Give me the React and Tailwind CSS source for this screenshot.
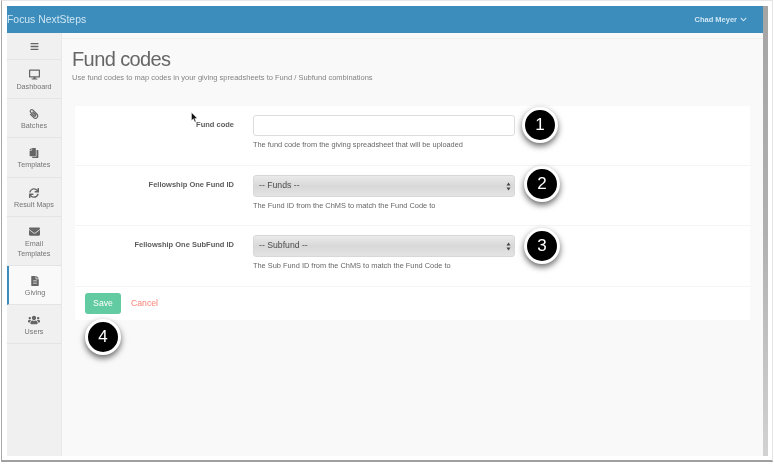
import React from 'react';
import { FaBars, FaDesktop, FaPaperclip, FaCopy, FaSync, FaEnvelope, FaFileAlt, FaUsers, FaChevronDown } from 'react-icons/fa';

const navItems = [
  { label: ['Dashboard'], icon: FaDesktop, height: 'h-[39px]', iconClass: 'text-[11px]' },
  { label: ['Batches'], icon: FaPaperclip, height: 'h-[39px]', iconClass: 'text-[10px] -scale-x-100' },
  { label: ['Templates'], icon: FaCopy, height: 'h-[40px]', iconClass: 'text-[10px] -scale-x-100' },
  { label: ['Result Maps'], icon: FaSync, height: 'h-[39px]', iconClass: 'text-[10px]' },
  { label: ['Email', 'Templates'], icon: FaEnvelope, height: 'h-[49px]', iconClass: 'text-[11px]' },
  { label: ['Giving'], icon: FaFileAlt, height: 'h-[39px]', iconClass: 'text-[10px]', active: true },
  { label: ['Users'], icon: FaUsers, height: 'h-[39px]', iconClass: 'text-[12px]' },
];

function NavItem({ item }) {
  const Icon = item.icon;
  return (
    <div
      className={`${item.height} flex flex-col items-center pt-[9px] border-b border-[#e4e4e4] ${
        item.active ? 'bg-[#f9f9f9] border-l-2 border-l-[#3c8dbc]' : ''
      }`}
    >
      <div className="h-[11px] flex items-center">
        <Icon className={`text-[#666] shrink-0 ${item.iconClass}`} />
      </div>
      <div className="mt-[2px] text-[7.2px] leading-[9.5px] text-[#747474] text-center">
        {item.label.map((line) => (
          <div key={line}>{line}</div>
        ))}
      </div>
    </div>
  );
}

function Badge({ n, className }) {
  return (
    <div
      className={`absolute w-[36px] h-[36px] rounded-full bg-black border-[3px] border-white text-white flex items-center justify-center text-[17px] shadow-[0_3px_6px_rgba(0,0,0,0.6)] ${className}`}
    >
      {n}
    </div>
  );
}

function FormRow({ label, help, children, height }) {
  return (
    <div className={`${height} flex border-b border-[#f5f5f5]`}>
      <div className="w-[159px] shrink-0 pt-[13px] text-right text-[7.5px] font-bold text-[#5c5c5c]">{label}</div>
      <div className="ml-[19px] pt-[9px] w-[262px]">
        {children}
        <div className="mt-[4px] text-[7.4px] leading-[10px] text-[#666]">{help}</div>
      </div>
    </div>
  );
}

function FakeSelect({ text }) {
  return (
    <div className="h-[22px] rounded-[3px] border border-[#d8d8d8] bg-gradient-to-b from-[#eaeaea] via-[#d8d8d8] to-[#e4e4e4] flex items-center justify-between pl-[5px] pr-[3px] text-[8.7px] text-[#4d4d4d]">
      <span>{text}</span>
      <svg width="5" height="9" viewBox="0 0 5 9" className="fill-[#444]">
        <path d="M2.5 0.5 L4.5 3.5 H0.5 Z M2.5 8.5 L0.5 5.5 H4.5 Z" />
      </svg>
    </div>
  );
}

export default function App() {
  return (
    <div className="relative w-[774px] h-[464px] bg-white overflow-hidden font-['Liberation_Sans',Arial,sans-serif] blur-[0.3px]">
      {/* screenshot window frame */}
      <div className="w-[772px] h-[462px] ml-[1px] border-l border-r border-b-[2px] border-t border-t-[#e6e6e6] border-l-[#a8a8a8] border-r-[#e4e4e4] border-b-[#a0a0a0] pl-[5px] pr-[4px] pt-[5px] pb-[4px] flex">
        <div className="flex-1 flex flex-col min-w-0">
          <header className="h-[27px] shrink-0 bg-[#3c8dbc] flex items-center justify-between pr-[16px]">
            <span className="text-[#cfe6f3] text-[10.4px]">Focus NextSteps</span>
            <span className="flex items-center gap-[3px] text-[#cfe6f3] text-[7.5px] font-bold">
              Chad Meyer
              <FaChevronDown className="text-[7px]" />
            </span>
          </header>
          <div className="flex-1 flex min-h-0">
            <aside className="w-[55px] shrink-0 bg-[#f0f0f0] border-r border-[#e8e8e8]">
              <div className="h-[27px] flex items-center justify-center border-b border-[#e4e4e4]">
                <FaBars className="text-[#666] text-[9px]" />
              </div>
              {navItems.map((item) => (
                <NavItem key={item.label.join(' ')} item={item} />
              ))}
            </aside>
            <main className="flex-1 bg-[#f9f9f9]">
              <div className="h-[6px] border-b border-[#f0f0f0]" />
              <div className="pl-[10px] pr-[13px] pt-[8px]">
                <h1 className="text-[20px] leading-[24px] tracking-[-0.6px] text-[#666]">Fund codes</h1>
                <p className="mt-[2px] text-[7.5px] leading-[10px] text-[#858585]">
                  Use fund codes to map codes in your giving spreadsheets to Fund / Subfund combinations
                </p>
                <div className="mt-[23px] ml-[3px] bg-white rounded-[2px] h-[214px]">
                  <FormRow
                    label="Fund code"
                    height="h-[60px]"
                    help="The fund code from the giving spreadsheet that will be uploaded"
                  >
                    <div className="h-[21px] rounded-[3px] border border-[#dcdcdc] bg-white" />
                  </FormRow>
                  <FormRow
                    label="Fellowship One Fund ID"
                    height="h-[60px]"
                    help="The Fund ID from the ChMS to match the Fund Code to"
                  >
                    <FakeSelect text="-- Funds --" />
                  </FormRow>
                  <FormRow
                    label="Fellowship One SubFund ID"
                    height="h-[61px]"
                    help="The Sub Fund ID from the ChMS to match the Fund Code to"
                  >
                    <FakeSelect text="-- Subfund --" />
                  </FormRow>
                  <div className="flex items-center pl-[10px] pt-[6px]">
                    <button className="w-[36px] h-[21px] rounded-[3px] bg-[#62cba2] text-white text-[8.7px]">Save</button>
                    <span className="ml-[10px] text-[8.7px] text-[#fb8378]">Cancel</span>
                  </div>
                </div>
              </div>
            </main>
          </div>
        </div>
        <div className="w-[5px] shrink-0 bg-gradient-to-b from-[#a5a5a5] via-[#b0b0b0] to-[#d2d2d2]" />
      </div>

      <Badge n="1" className="left-[522px] top-[107px]" />
      <Badge n="2" className="left-[524px] top-[166px]" />
      <Badge n="3" className="left-[524px] top-[228px]" />
      <Badge n="4" className="left-[85px] top-[319px]" />

      {/* mouse cursor */}
      <svg width="7" height="11" viewBox="0 0 7 11" className="absolute left-[191px] top-[112px]">
        <path d="M0.5 0.5 V8.5 L2.4 6.8 L3.8 10 L5 9.4 L3.7 6.4 L6.2 6.2 Z" fill="#111" stroke="#fff" strokeWidth="0.4" />
      </svg>
    </div>
  );
}
